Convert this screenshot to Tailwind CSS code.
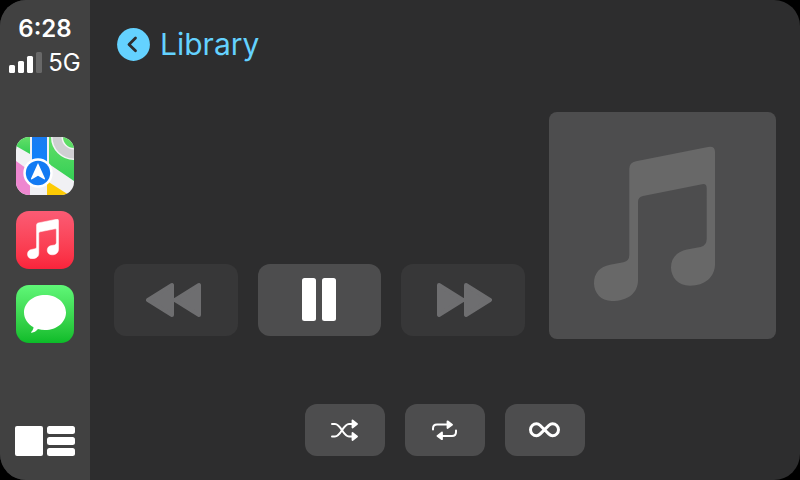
<!DOCTYPE html>
<html lang="en">
<head>
  <meta charset="UTF-8" />
  <meta name="viewport" content="width=device-width, initial-scale=1.0" />
  <title>Now Playing</title>
  <script src="https://cdn.jsdelivr.net/npm/@tailwindcss/browser@4"></script>
</head>
<body class="bg-black font-['Inter',sans-serif]">
  <svg class="hidden">
    <symbol id="note" viewBox="45 34 121 156">
      <path d="M80.3 57Q80.3 50.5 87 49.2L159 35Q166 33.700 166 40V152C166 165 156 173.700 141 173.700C129 173.700 122 165 122 155.500C122 146 128 139.500 138 137.500L151.500 135Q157.700 133.500 157.700 127V76Q157.700 71.300 153 72.200L94 84Q89 85 89 90V168C89 181 79 189 62.700 189C52 189 45 181 45 171.300C45 161 51 154.500 61 152.700L74.500 150.200Q80.300 149 80.300 143Z" />
    </symbol>
  </svg>

  <div class="flex min-h-screen overflow-hidden rounded-[26px] bg-[#2d2d2e]">
    <!-- Sidebar -->
    <aside class="flex w-[90px] shrink-0 flex-col items-center bg-[#414141] pt-[17px] pb-6 text-white">
      <time class="text-2xl leading-6 font-semibold">6:28</time>
      <div class="mt-[7px] flex items-center gap-1.5">
        <svg class="h-[22px] w-[33px]" viewBox="0 0 33 22" fill="#fff" role="img" aria-label="Signal strength">
          <rect x="0" y="13" width="6" height="8" rx="1.500" />
          <rect x="9" y="9" width="6" height="12" rx="1.500" />
          <rect x="18" y="4" width="6" height="17" rx="1.500" />
          <rect x="27" y="0" width="6" height="21" rx="1.500" fill="#686868" />
        </svg>
        <span class="text-2xl leading-[30px]">5G</span>
      </div>

      <nav class="mt-[59px] flex flex-col gap-4">
        <a href="#maps" aria-label="Maps" class="block size-[58px] overflow-hidden rounded-[13px]">
          <svg class="size-full" viewBox="0 0 58 58">
            <defs>
              <linearGradient id="land" x1="0" y1="0" x2="0" y2="1">
                <stop offset="0" stop-color="#63df68" />
                <stop offset="1" stop-color="#34cf55" />
              </linearGradient>
              <linearGradient id="road" x1="0" y1="0" x2="0" y2="1">
                <stop offset="0" stop-color="#1a7cf2" />
                <stop offset="1" stop-color="#0a84ff" />
              </linearGradient>
            </defs>
            <rect width="58" height="58" fill="#f1f1f4" />
            <path d="M0 0H14V17L0 9Z" fill="url(#land)" />
            <path d="M33 0H58V44L33 27Z" fill="url(#land)" />
            <path d="M0 24L14 34V58H0Z" fill="#ee87d0" />
            <path d="M31 44L53 58H31Z" fill="#fdcb05" />
            <circle cx="58" cy="0" r="17" fill="none" stroke="#f4f4f6" stroke-width="12" />
            <circle cx="58" cy="0" r="17" fill="none" stroke="#cfcfd2" stroke-width="9" />
            <path d="M16 0H31V36H16Z" fill="url(#road)" />
            <circle cx="22" cy="36" r="14.700" fill="#fff" />
            <circle cx="22" cy="36" r="12.200" fill="#137bf3" />
            <path d="M22 26L29 41.500Q29.200 42.700 28 42.300L22 38.700L16 42.300Q14.800 42.700 15 41.500Z" fill="#fff" />
          </svg>
        </a>
        <a href="#music" aria-label="Music" class="flex size-[58px] items-center justify-center rounded-[13px] bg-linear-to-b from-[#fb5b74] to-[#fa233b] pr-1 pb-0.5">
          <svg class="h-10 w-8" fill="#fff" stroke="#fff" stroke-width="2"><use href="#note" /></svg>
        </a>
        <a href="#messages" aria-label="Messages" class="block size-[58px] rounded-[13px] bg-linear-to-b from-[#5ff777] to-[#0abc28]">
          <svg class="size-full" viewBox="0 0 58 58" fill="#fff">
            <path d="M29 10C40.800 10 50 17.800 50 27.500S40.800 45 29 45C26.500 45 24.200 44.700 22 44C20 46.300 18 47.500 15.700 47.700C15 47.700 15 47.200 15.400 46.700C16.800 45.200 17.400 43.700 17.500 42.200C11.800 39 8 33.600 8 27.500C8 17.800 17.200 10 29 10Z" />
          </svg>
        </a>
      </nav>

      <button type="button" aria-label="Dashboard" class="mt-auto">
        <svg class="h-[30px] w-[60px]" viewBox="0 0 60 30" fill="#fff">
          <rect width="28" height="30" rx="2" />
          <rect x="32" width="28" height="8" rx="2.500" />
          <rect x="32" y="11" width="28" height="8" rx="2.500" />
          <rect x="32" y="22" width="28" height="8" rx="2.500" />
        </svg>
      </button>
    </aside>

    <main class="flex flex-1 flex-col px-6 pt-7 pb-6">
      <a href="#library" class="flex items-center gap-2.5 self-start pl-[3px] text-[#64d2ff]">
        <svg class="size-[33px]" viewBox="0 0 33 33">
          <circle cx="16.500" cy="16.500" r="16.400" fill="currentColor" />
          <path d="M18.500 10L12 16.400L18.500 22.800" fill="none" stroke="#2d2d2e" stroke-width="2.800" stroke-linecap="round" stroke-linejoin="round" />
        </svg>
        <span class="text-[30px] leading-[33px]">Library</span>
      </a>

      <!-- Player -->
      <div class="mt-[51px] flex items-end gap-6">
        <div class="mb-[3px] grid flex-1 grid-cols-3 gap-5">
          <button type="button" aria-label="Previous" disabled class="flex h-[72px] items-center justify-center rounded-xl bg-[#373738]">
            <svg class="h-9 w-[60px]" viewBox="0 0 60 36" fill="#6e6e70" stroke="#6e6e70" stroke-width="4" stroke-linejoin="round">
              <path d="M2 18L26 3V33Z" />
              <path d="M29 18L53 3V33Z" />
            </svg>
          </button>
          <button type="button" aria-label="Pause" class="flex h-[72px] items-center justify-center rounded-xl bg-[#4d4d4e]">
            <svg class="h-11 w-[34px]" viewBox="0 0 34 44" fill="#fff">
              <rect width="14" height="43" rx="2.500" />
              <rect x="20" width="14" height="43" rx="2.500" />
            </svg>
          </button>
          <button type="button" aria-label="Next" disabled class="flex h-[72px] items-center justify-center rounded-xl bg-[#373738]">
            <svg class="h-9 w-[58px]" viewBox="0 0 58 36" fill="#6e6e70" stroke="#6e6e70" stroke-width="4" stroke-linejoin="round">
              <path d="M5 3L29 18L5 33Z" />
              <path d="M32 3L56 18L32 33Z" />
            </svg>
          </button>
        </div>
        <div class="flex size-[227px] shrink-0 items-center justify-center rounded-lg bg-[#4d4d4e] pr-4 pb-1">
          <svg class="h-[156px] w-[121px]" fill="#686868"><use href="#note" /></svg>
        </div>
      </div>

      <!-- Playback modes -->
      <div class="mt-auto flex justify-center gap-5 text-white">
        <button type="button" aria-label="Shuffle" class="flex h-[52px] w-20 items-center justify-center rounded-xl bg-[#4d4d4e]">
          <svg class="h-[22px] w-7" viewBox="0 0 28 22" fill="none" stroke="currentColor" stroke-width="2" stroke-linecap="round" stroke-linejoin="round">
            <path d="M1 5H4C10 5 12 17.500 18 17.500H21" />
            <path d="M1 17.500H4C10 17.500 12 5 18 5H21" />
            <path d="M21.500 1.500L26 5L21.500 8.500ZM21.500 14L26 17.500L21.500 21Z" fill="currentColor" stroke-width="1.800" />
          </svg>
        </button>
        <button type="button" aria-label="Repeat" class="flex h-[52px] w-20 items-center justify-center rounded-xl bg-[#4d4d4e]">
          <svg class="h-5 w-[26px]" viewBox="0 0 26 20" fill="none" stroke="currentColor" stroke-width="2" stroke-linecap="round" stroke-linejoin="round">
            <path d="M1 9.500V8.500Q1 4.500 5 4.500H15" />
            <path d="M24 10.500V12Q24 16 20 16H10" />
            <path d="M15.500 1.300L20 4.700L15.500 8ZM10 12.500L5.500 16L10 19.300Z" fill="currentColor" stroke-width="1.800" />
          </svg>
        </button>
        <button type="button" aria-label="Autoplay" class="flex h-[52px] w-20 items-center justify-center rounded-xl bg-[#4d4d4e]">
          <svg class="h-4 w-8" viewBox="0 0 32 16" fill="none" stroke="currentColor" stroke-width="3" stroke-linecap="round" stroke-linejoin="round">
            <path d="M15.500 7.700L11 3.300C10 2.300 8.800 1.700 7.500 1.700A6 6 0 0 0 7.500 13.700C8.800 13.700 10 13.100 11 12.100L20 3.300C21 2.300 22.200 1.700 23.500 1.700A6 6 0 0 1 23.500 13.700C22.200 13.700 21 13.100 20 12.100Z" />
          </svg>
        </button>
      </div>
    </main>
  </div>
</body>
</html>
